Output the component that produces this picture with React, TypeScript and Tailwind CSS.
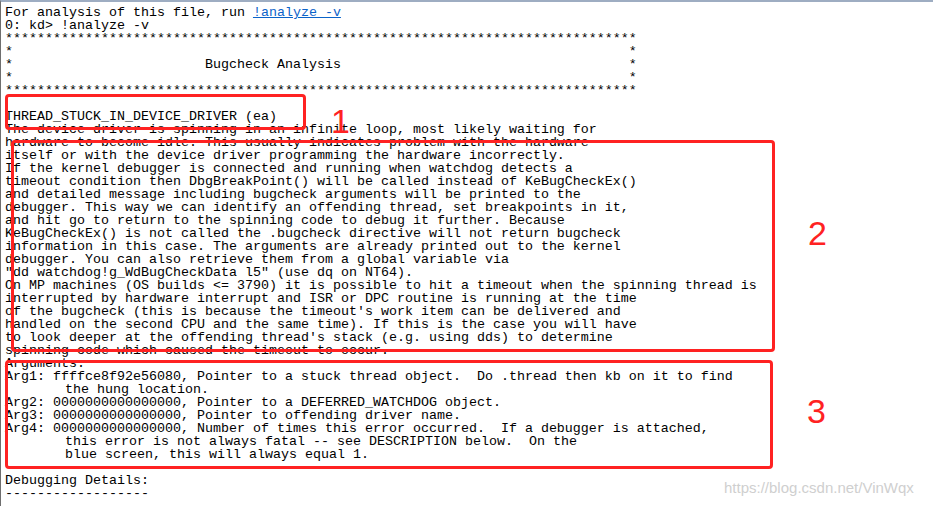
const stars = "*".repeat(79);
const blankRow = "*" + " ".repeat(77) + "*";
const titleRow = "*" + " ".repeat(24) + "Bugcheck Analysis" + " ".repeat(36) + "*";

const body = [
    "0: kd> !analyze -v",
    stars,
    blankRow,
    titleRow,
    blankRow,
    stars,
    "",
    "THREAD_STUCK_IN_DEVICE_DRIVER (ea)",
    "The device driver is spinning in an infinite loop, most likely waiting for",
    "hardware to become idle. This usually indicates problem with the hardware",
    "itself or with the device driver programming the hardware incorrectly.",
    "If the kernel debugger is connected and running when watchdog detects a",
    "timeout condition then DbgBreakPoint() will be called instead of KeBugCheckEx()",
    "and detailed message including bugcheck arguments will be printed to the",
    "debugger. This way we can identify an offending thread, set breakpoints in it,",
    "and hit go to return to the spinning code to debug it further. Because",
    "KeBugCheckEx() is not called the .bugcheck directive will not return bugcheck",
    "information in this case. The arguments are already printed out to the kernel",
    "debugger. You can also retrieve them from a global variable via",
    '"dd watchdog!g_WdBugCheckData l5" (use dq on NT64).',
    "On MP machines (OS builds <= 3790) it is possible to hit a timeout when the spinning thread is",
    "interrupted by hardware interrupt and ISR or DPC routine is running at the time",
    "of the bugcheck (this is because the timeout's work item can be delivered and",
    "handled on the second CPU and the same time). If this is the case you will have",
    "to look deeper at the offending thread's stack (e.g. using dds) to determine",
    "spinning code which caused the timeout to occur.",
    "Arguments:",
    "Arg1: ffffce8f92e56080, Pointer to a stuck thread object.  Do .thread then kb on it to find",
    "\tthe hung location.",
    "Arg2: 0000000000000000, Pointer to a DEFERRED_WATCHDOG object.",
    "Arg3: 0000000000000000, Pointer to offending driver name.",
    "Arg4: 0000000000000000, Number of times this error occurred.  If a debugger is attached,",
    "\tthis error is not always fatal -- see DESCRIPTION below.  On the",
    "\tblue screen, this will always equal 1.",
    "",
    "Debugging Details:",
    "------------------",
].join("\n");

// red annotation frame drawn over the debugger output
const Mark = ({ className }: { className: string }) => (
    <div className={`absolute rounded-[4px] border-[3px] border-[#ff2222] ${className}`} />
);

const Label = ({ text, className }: { text: string; className: string }) => (
    <div
        className={`absolute text-[34px] leading-[34px] text-[#ff2222] font-['Liberation_Sans',Arial,sans-serif] ${className}`}
    >
        {text}
    </div>
);

export default function App() {
    return (
        <div className="relative h-[506px] w-[933px] overflow-hidden bg-white">
            <div className="h-full w-full border-l border-t-2 border-l-[#6e6e6e] border-t-[#9eadc2]">
                <pre className="pl-[4px] pt-[4px] text-[13.333px] leading-[13px] text-black [tab-size:60px] font-['Liberation_Mono','Courier_New',monospace]">
                    For analysis of this file, run{" "}
                    <span className="text-[#0b63c9] underline">!analyze -v</span>
                    {"\n"}
                    {body}
                </pre>
            </div>

            <Mark className="left-[5px] top-[94px] h-[36px] w-[301px]" />
            <Mark className="left-[11px] top-[140px] h-[212px] w-[764px]" />
            <Mark className="left-[5px] top-[360px] h-[109px] w-[768px]" />
            <Label text="1" className="left-[331px] top-[104px]" />
            <Label text="2" className="left-[808px] top-[216px]" />
            <Label text="3" className="left-[807px] top-[394px]" />

            <div className="absolute left-[724px] top-[479px] text-[15px] leading-[18px] text-[#cfcfcf] font-['Liberation_Sans',Arial,sans-serif]">
                https://blog.csdn.net/VinWqx
            </div>
        </div>
    );
}
